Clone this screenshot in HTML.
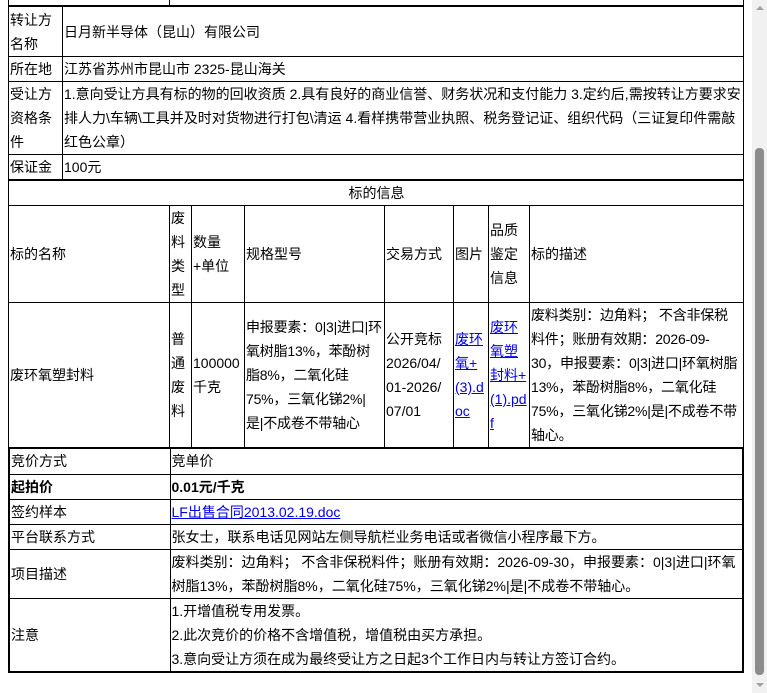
<!DOCTYPE html>
<html><head><meta charset="utf-8"><style>
*{margin:0;padding:0;box-sizing:border-box}
body{width:767px;height:693px;overflow:hidden;background:#fff;position:relative;font-family:"Liberation Sans","WenQuanYi Zen Hei","Noto Sans CJK SC",sans-serif;font-size:14px;line-height:24px;color:#000}
table{position:absolute;left:8px;width:736px;border-collapse:collapse;table-layout:fixed}
td{border:1px solid #000;padding:0 0 0 1px;vertical-align:middle;overflow:hidden;overflow-wrap:break-word;word-break:normal}
.nw{white-space:nowrap;letter-spacing:-0.2px}
a{color:#00e}
.sb{position:absolute;left:752px;top:0;width:15px;height:693px;background:#f1f1f1}
.th{position:absolute;left:755px;top:148px;width:9px;height:527px;background:#8c8c8c;border-radius:4px}
</style></head><body>
<div style="position:absolute;left:8px;top:0;width:736px;height:7px;border-left:1px solid #000;border-right:1px solid #000;border-bottom:2px solid #000"></div>
<div style="position:absolute;left:169px;top:0;width:1px;height:6px;background:#000"></div>
<table style="top:6px">
<col style="width:54px"><col>
<tr style="height:50px"><td>转让方<br>名称</td><td>日月新半导体（昆山）有限公司</td></tr>
<tr style="height:25px"><td>所在地</td><td>江苏省苏州市昆山市 2325-昆山海关</td></tr>
<tr style="height:73px"><td>受让方<br>资格条<br>件</td><td>1.意向受让方具有标的物的回收资质 2.具有良好的商业信誉、财务状况和支付能力 3.定约后,需按转让方要求安排人力\车辆\工具并及时对货物进行打包\清运 4.看样携带营业执照、税务登记证、组织代码（三证复印件需敲红色公章）</td></tr>
<tr style="height:25px"><td>保证金</td><td>100元</td></tr>
</table>
<div style="position:absolute;left:8px;top:179px;width:736px;height:2px;background:#000"></div>
<table style="top:180px">
<col style="width:161px"><col style="width:22px"><col style="width:53px"><col style="width:140px"><col style="width:69px"><col style="width:35px"><col style="width:41px"><col>
<tr style="height:25px"><td colspan="8" style="text-align:center">标的信息</td></tr>
<tr style="height:97px"><td>标的名称</td><td>废<br>料<br>类<br>型</td><td>数量<br>+单位</td><td>规格型号</td><td>交易方式</td><td>图片</td><td>品质<br>鉴定<br>信息</td><td>标的描述</td></tr>
<tr style="height:145px"><td>废环氧塑封料</td><td>普<br>通<br>废<br>料</td><td>100000<br>千克</td><td class="nw">申报要素：0|3|进口|环<br>氧树脂13%，苯酚树<br>脂8%，二氧化硅<br>75%，三氧化锑2%|<br>是|不成卷不带轴心</td><td>公开竞标<br>2026/04/<br>01-2026/<br>07/01</td><td><a href="#">废环<br>氧+<br>(3).d<br>oc</a></td><td><a href="#">废环<br>氧塑<br>封料+<br>(1).pd<br>f</a></td><td class="nw">废料类别：边角料； 不含非保税<br>料件；账册有效期：2026-09-<br>30，申报要素：0|3|进口|环氧树脂<br>13%，苯酚树脂8%，二氧化硅<br>75%，三氧化锑2%|是|不成卷不带<br>轴心。</td></tr>
</table>
<table style="top:447px;border:2px solid #000">
<col style="width:161px"><col>
<tr style="height:26px"><td>竞价方式</td><td>竞单价</td></tr>
<tr style="height:25px;font-weight:bold"><td>起拍价</td><td>0.01元/千克</td></tr>
<tr style="height:25px"><td>签约样本</td><td><a href="#">LF出售合同2013.02.19.doc</a></td></tr>
<tr style="height:25px"><td>平台联系方式</td><td>张女士，联系电话见网站左侧导航栏业务电话或者微信小程序最下方。</td></tr>
<tr style="height:49px"><td>项目描述</td><td>废料类别：边角料； 不含非保税料件；账册有效期：2026-09-30，申报要素：0|3|进口|环氧树脂13%，苯酚树脂8%，二氧化硅75%，三氧化锑2%|是|不成卷不带轴心。</td></tr>
<tr style="height:73px"><td>注意</td><td>1.开增值税专用发票。<br>2.此次竞价的价格不含增值税，增值税由买方承担。<br>3.意向受让方须在成为最终受让方之日起3个工作日内与转让方签订合约。</td></tr>
</table>
<div class="sb"></div><div class="th"></div>
<div style="position:absolute;left:756px;top:6px;width:0;height:0;border-left:4px solid transparent;border-right:4px solid transparent;border-bottom:4px solid #a0a0a0"></div>
<div style="position:absolute;left:756px;top:683px;width:0;height:0;border-left:4px solid transparent;border-right:4px solid transparent;border-top:4px solid #a0a0a0"></div>
</body></html>
